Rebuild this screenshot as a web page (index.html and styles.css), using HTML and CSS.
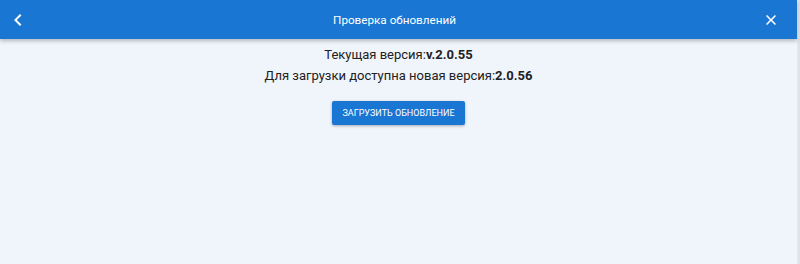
FILE: index.html
```html
<!DOCTYPE html>
<html lang="ru">
<head>
  <meta charset="UTF-8">
  <title>Проверка обновлений</title>
  <link rel="stylesheet" href="styles.css">
</head>
<body>
  <div class="App">
    <div class="Header">
      <button class="iconBtn">
        <svg width="24" height="24" viewBox="0 0 24 24"><path d="M15.4 7.4L14 6l-6 6 6 6 1.4-1.4L10.8 12z" fill="#fff"/></svg>
      </button>
      <div class="Title">Проверка обновлений</div>
      <button class="iconBtn">
        <svg width="24" height="24" viewBox="0 0 24 24"><path d="M17 8.1L15.9 7 12 10.9 8.1 7 7 8.1 10.9 12 7 15.9 8.1 17 12 13.1 15.9 17 17 15.9 13.1 12z" fill="#fff"/></svg>
      </button>
    </div>
    <div class="Content">
      <p class="line">Текущая версия:<b>v.2.0.55</b></p>
      <p class="line">Для загрузки доступна новая версия:<b>2.0.56</b></p>
      <button class="loadButton">Загрузить обновление</button>
    </div>
  </div>
</body>
</html>
```
FILE: styles.css
```css
html, body{
  margin: 0;
  height: 100%;
}
body{
  font-family: Roboto, "Noto Sans", sans-serif;
  background-color: #f0f4fb;
}
.App{
  height: 100%;
  margin-right: 3px;
  box-shadow: 1px 0 0 #e4e8ee, 3px 0 0 #dfe3e9;
  display: flex;
  flex-direction: column;
}
.Header{
  height: 39px;
  background-color: #1976d2;
  display: flex;
  align-items: center;
  justify-content: space-between;
  padding: 0 14px 0 6px;
  box-shadow: 0 2px 4px rgba(0,0,0,0.25);
  color: #ffffff;
}
.iconBtn{
  background: none;
  border: none;
  padding: 0;
  width: 24px;
  height: 24px;
  display: flex;
}
.Title{
  font-size: 11.7px;
}
.Content{
  display: flex;
  flex-direction: column;
  align-items: center;
  padding-top: 5px;
  color: #212121;
}
.line{
  margin: 0;
  font-size: 13px;
  line-height: 21px;
}
.line b{
  font-weight: 700;
}
.loadButton{
  margin-top: 15px;
  height: 24px;
  padding: 0 10px;
  font-family: Roboto, sans-serif;
  font-size: 9px;
  text-transform: uppercase;
  color: #ffffff;
  background-color: #1976d2;
  border: none;
  border-radius: 2px;
  box-shadow: 0 1px 3px rgba(0,0,0,0.3);
}
```
